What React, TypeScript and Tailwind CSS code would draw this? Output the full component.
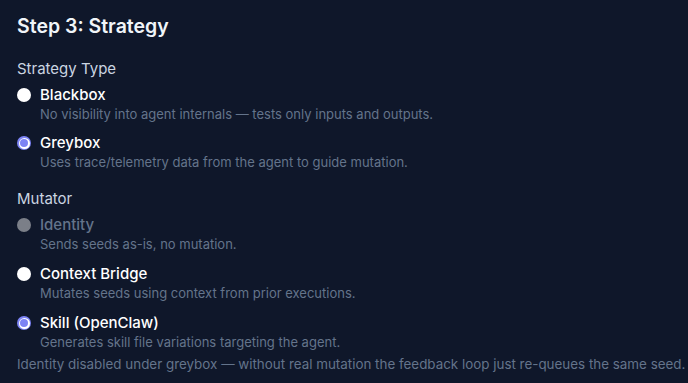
const groups = [
  {
    label: 'Strategy Type',
    options: [
      { name: 'Blackbox', desc: 'No visibility into agent internals — tests only inputs and outputs.', state: 'off' },
      { name: 'Greybox', desc: 'Uses trace/telemetry data from the agent to guide mutation.', state: 'on' },
    ],
  },
  {
    label: 'Mutator',
    options: [
      { name: 'Identity', desc: 'Sends seeds as-is, no mutation.', state: 'disabled' },
      { name: 'Context Bridge', desc: 'Mutates seeds using context from prior executions.', state: 'off' },
      { name: 'Skill (OpenClaw)', desc: 'Generates skill file variations targeting the agent.', state: 'on' },
    ],
  },
]

function Radio({ state }: { state: string }) {
  if (state === 'on')
    return (
      <span className="flex h-[14px] w-[14px] items-center justify-center rounded-full bg-[#7c83f5]">
        <span className="flex h-[11px] w-[11px] items-center justify-center rounded-full bg-white">
          <span className="h-[8px] w-[8px] rounded-full bg-[#7c83f5]" />
        </span>
      </span>
    )
  if (state === 'disabled') return <span className="h-[14px] w-[14px] rounded-full bg-[#7b7f88]" />
  return <span className="h-[14px] w-[14px] rounded-full bg-white" />
}

export default function App() {
  return (
    <div className="h-[383px] w-[688px] overflow-hidden bg-[#0f172a] px-[17px] pt-[12px] font-['Inter',sans-serif]">
      <h2 className="text-[19.5px] font-semibold leading-[28px] text-[#f1f5f9]">Step 3: Strategy</h2>
      {groups.map((g, gi) => (
        <div key={g.label} className={gi === 0 ? 'mt-[18px]' : 'mt-[17px]'}>
          <div className="text-[15px] leading-[22px] text-[#cbd5e1]">{g.label}</div>
          <div className={`mt-[5px] flex flex-col ${gi === 0 ? 'gap-[10px]' : 'gap-[11px]'}`}>
            {g.options.map((o) => (
              <label key={o.name} className="flex items-start gap-[9px]">
                <span className="mt-[3px] flex">
                  <Radio state={o.state} />
                </span>
                <span className="flex flex-col">
                  <span className={`text-[15px] font-medium leading-[20px] ${o.state === 'disabled' ? 'text-[#64748b]' : 'text-white'}`}>{o.name}</span>
                  <span className="text-[13px] leading-[18px] text-[#64748b]">{o.desc}</span>
                </span>
              </label>
            ))}
          </div>
        </div>
      ))}
      <p className="mt-[4px] whitespace-nowrap text-[13.4px] leading-[18px] text-[#64748b]">
        Identity disabled under greybox — without real mutation the feedback loop just re-queues the same seed.
      </p>
    </div>
  )
}
